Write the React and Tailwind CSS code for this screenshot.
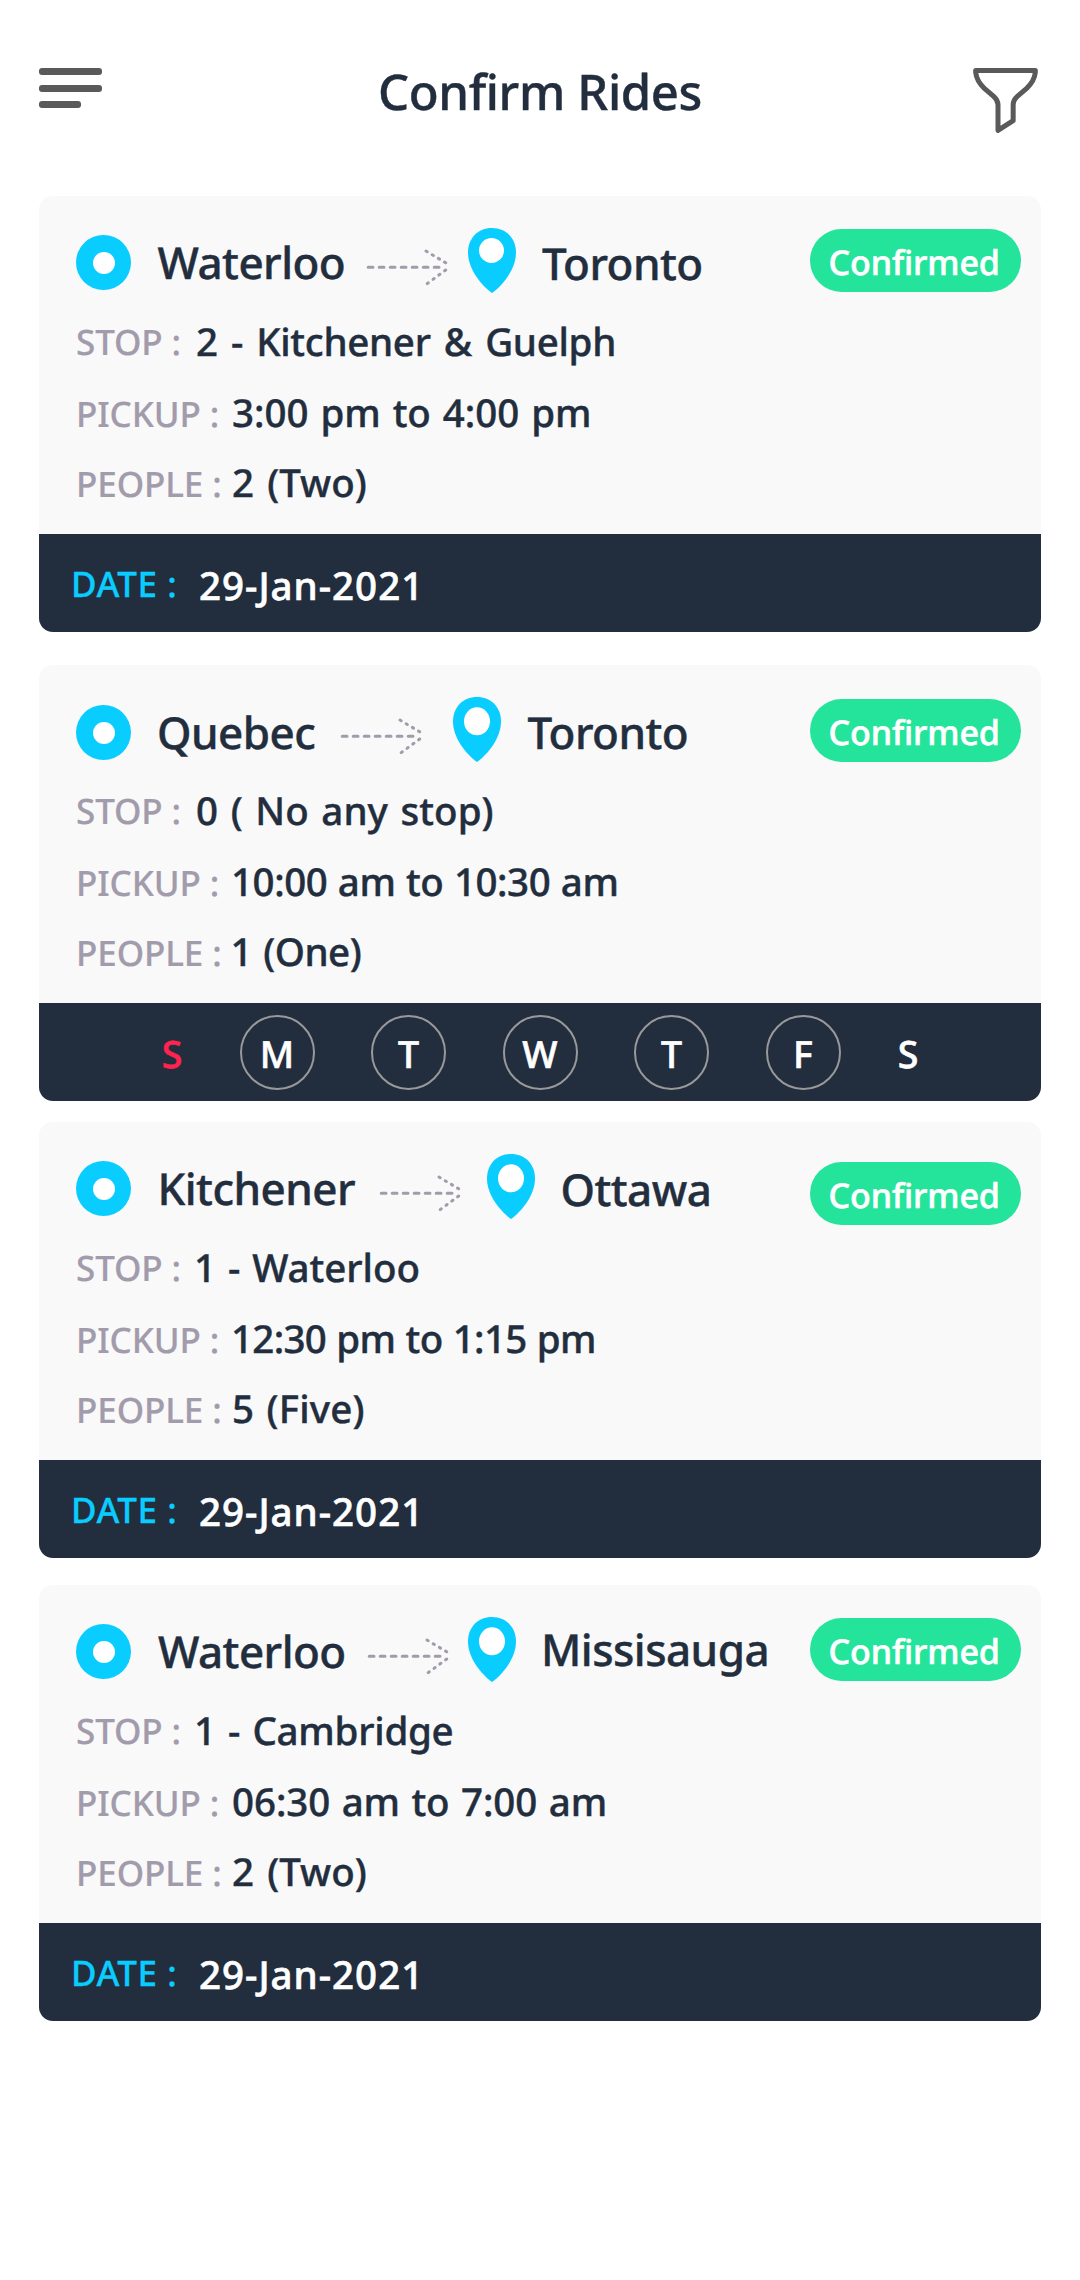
const rides = [
  {
    gap: "",
    from: { name: "Waterloo", box: "w-[235px] pl-[26.5px] mt-[36px]" },
    to: { name: "Toronto", box: "ml-[26px] mt-[37px]" },
    dot: "mt-[39px]",
    arrow: "w-[102px]",
    pin: "mt-[32px]",
    hole: { cx: 23.5, cy: 22.5, rx: 12.5, ry: 12.5 },
    badge: "mt-[33px]",
    stop: ["2 - Kitchener & Guelph", "tracking-[-0.3px] [word-spacing:3.5px]"],
    pickup: ["3:00 pm to 4:00 pm", "tracking-[-0.03px] [word-spacing:2px]"],
    people: ["2 (Two)", "tracking-[0.05px] [word-spacing:3px]"],
    date: "29-Jan-2021",
  },
  {
    gap: "mt-[33px]",
    from: { name: "Quebec", box: "w-[209px] pl-[26px] mt-[37px]" },
    to: { name: "Toronto", box: "ml-[26.5px] mt-[37px]" },
    dot: "mt-[40px]",
    arrow: "w-[113px]",
    pin: "mt-[31.5px]",
    hole: { cx: 24, cy: 24.3, rx: 13, ry: 14 },
    badge: "mt-[34px]",
    stop: ["0 ( No any stop)", "tracking-[0.05px] [word-spacing:2.5px]"],
    pickup: ["10:00 am to 10:30 am", "tracking-[-0.45px] [word-spacing:1px] -ml-[1px]"],
    people: ["1 (One)", "tracking-[-0.45px] [word-spacing:1.5px] -ml-[1.5px]"],
  },
  {
    gap: "mt-[21px]",
    from: { name: "Kitchener", box: "w-[248px] pl-[26.5px] mt-[36px]" },
    to: { name: "Ottawa", box: "ml-[25.5px] mt-[37px]" },
    dot: "mt-[39px]",
    arrow: "w-[108px]",
    pin: "mt-[31.8px]",
    hole: { cx: 24, cy: 24.3, rx: 13, ry: 14 },
    badge: "mt-[40px]",
    stop: ["1 - Waterloo", "tracking-[-0.05px] [word-spacing:2px] -ml-[2px]"],
    pickup: ["12:30 pm to 1:15 pm", "tracking-[-0.7px] [word-spacing:1px] -ml-[1px]"],
    people: ["5 (Five)", "tracking-[0.2px] [word-spacing:2px]"],
    date: "29-Jan-2021",
  },
  {
    gap: "mt-[27px]",
    from: { name: "Waterloo", box: "w-[236px] pl-[27px] mt-[36px]" },
    to: { name: "Missisauga", box: "ml-[25px] mt-[34px]" },
    dot: "mt-[39px]",
    arrow: "w-[101px]",
    pin: "mt-[31.5px]",
    hole: { cx: 24, cy: 24.3, rx: 13, ry: 14 },
    badge: "mt-[33px]",
    stop: ["1 - Cambridge", "tracking-[-0.25px] [word-spacing:2.5px] -ml-[2px]"],
    pickup: ["06:30 am to 7:00 am", "tracking-[-0.07px] [word-spacing:1.5px]"],
    people: ["2 (Two)", "tracking-[0.05px] [word-spacing:3px]"],
    date: "29-Jan-2021",
  },
];

const days = [
  { label: "S", style: "w-[22px] text-[#ff2350]" },
  { label: "M", style: "w-[75px] rounded-full border-2 border-[#999999]" },
  { label: "T", style: "w-[75px] rounded-full border-2 border-[#999999]" },
  { label: "W", style: "w-[75px] rounded-full border-2 border-[#999999]" },
  { label: "T", style: "w-[75px] rounded-full border-2 border-[#999999]" },
  { label: "F", style: "w-[75px] rounded-full border-2 border-[#999999]" },
  { label: "S", style: "w-[22px]" },
];

function MenuIcon() {
  return (
    <button aria-label="Menu" className="mt-[68px] flex w-[63px] flex-col items-start">
      <span className="h-[7px] w-full rounded-[3px] bg-[#5a5a5a]" />
      <span className="mt-[10px] h-[7px] w-full rounded-[3px] bg-[#5a5a5a]" />
      <span className="mt-[9px] h-[7px] w-[42px] rounded-[3px] bg-[#5a5a5a]" />
    </button>
  );
}

function FilterIcon() {
  return (
    <svg className="mt-[68px] h-[65px] w-[65px] shrink-0" viewBox="219 84 195 195" fill="none" stroke="#5a5a5a" strokeWidth="15" strokeLinejoin="round">
      <path d="M227 91.5H406V97C404 117 395 131 380 145L352 169C343 177 339.5 182 339.5 194V242L294 271V194C294 182 290 177 281 169L253 145C238 131 229 117 227 97Z" />
    </svg>
  );
}

function DashedArrow() {
  return (
    <svg className="mt-[51px] h-[40px] w-[84px]" viewBox="0 0 84 40" fill="none" stroke="#a29bac" strokeWidth="3" strokeLinecap="round">
      <path d="M2.2 20.3H74" strokeDasharray="4.8 6.2" />
      <path d="M60 4L80 16" strokeDasharray="1.4 5.8" />
      <path d="M61.2 36.6L80 22.8" strokeDasharray="1.4 5.8" />
    </svg>
  );
}

function Pin({ hole, className }) {
  return (
    <svg className={`${className} h-[65px] w-[48px] shrink-0`} viewBox="0 0 48 65">
      <path fill="#0acdff" d="M24 65C13 57 0 41 0 24.5C0 10 10 0 24 0S48 10 48 24.5C48 41 35 57 24 65Z" />
      <ellipse fill="#ffffff" {...hole} />
    </svg>
  );
}

function Row({ label, width, value, labelTop, className }) {
  return (
    <div className={`${className} flex h-[52px] items-start pl-[37px]`}>
      <span className={`${width} ${labelTop} shrink-0 text-[35px] leading-[47px] tracking-[-0.1px] text-[#a29bac] [-webkit-text-stroke:0.2px]`}>{label}</span>
      <span className={`${value[1]} mt-px text-[38.5px] leading-[52px]`}>{value[0]}</span>
    </div>
  );
}

function RideCard({ ride }) {
  return (
    <article className={`${ride.gap} h-[436px] overflow-hidden rounded-[14px] bg-[#f9f9f9]`}>
      <div className="flex h-[119px] items-start pl-[37px] pr-[20px]">
        <span className={`${ride.dot} flex size-[55px] shrink-0 items-center justify-center rounded-full bg-[#0acdff]`}>
          <span className="size-[22px] rounded-full bg-white" />
        </span>
        <span className={`${ride.from.box} shrink-0 text-[44px] leading-[60px] tracking-[-0.55px]`}>{ride.from.name}</span>
        <span className={`${ride.arrow} shrink-0`}>
          <DashedArrow />
        </span>
        <Pin hole={ride.hole} className={ride.pin} />
        <span className={`${ride.to.box} text-[44px] leading-[60px] tracking-[-0.55px]`}>{ride.to.name}</span>
        <span className={`${ride.badge} ml-auto h-[63px] w-[211px] shrink-0 rounded-[31.5px] bg-[#24e49b] pl-[18.5px] pt-[10px] text-[34px] leading-[46px] tracking-[-0.1px] text-white [-webkit-text-stroke:0.6px]`}>
          Confirmed
        </span>
      </div>
      <Row label="STOP :" width="w-[120px]" labelTop="mt-[4px]" value={ride.stop} className="" />
      <Row label="PICKUP :" width="w-[156px]" labelTop="mt-[5px]" value={ride.pickup} className="mt-[19px]" />
      <Row label="PEOPLE :" width="w-[156px]" labelTop="mt-[5px]" value={ride.people} className="mt-[18px]" />
      <footer className="mt-[26px] h-[98px] bg-[#222e3e] text-white [-webkit-text-stroke:0.6px]">
        {ride.date ? (
          <div className="flex items-start pl-[32px]">
            <span className="mt-[27px] w-[128px] text-[35px] leading-[47px] tracking-[0.5px] text-[#0acdff] [-webkit-text-stroke:0.3px]">DATE :</span>
            <span className="mt-[26px] text-[38.5px] leading-[52px] tracking-[1px]">{ride.date}</span>
          </div>
        ) : (
          <div className="flex justify-center gap-[56.5px] pt-[12px]">
            {days.map((day, i) => (
              <span key={i} className={`${day.style} flex h-[75px] items-center justify-center text-[37.5px] leading-[52px]`}>
                <span className="mt-[2px]">{day.label}</span>
              </span>
            ))}
          </div>
        )}
      </footer>
    </article>
  );
}

export default function App() {
  return (
    <main className="h-[2280px] w-[1080px] bg-white px-[39px] font-['Noto_Sans','Open_Sans',sans-serif] font-medium text-[#222e3e] [-webkit-text-stroke:0.4px] [font-variant-ligatures:none] [text-rendering:geometricPrecision] whitespace-nowrap">
      <header className="flex h-[196px] items-start pr-[3px]">
        <MenuIcon />
        <h1 className="mt-[59px] flex-1 pl-[5px] text-center text-[49px] leading-[66px] tracking-[-0.38px]">Confirm Rides</h1>
        <FilterIcon />
      </header>
      {rides.map((ride, i) => (
        <RideCard key={i} ride={ride} />
      ))}
    </main>
  );
}
